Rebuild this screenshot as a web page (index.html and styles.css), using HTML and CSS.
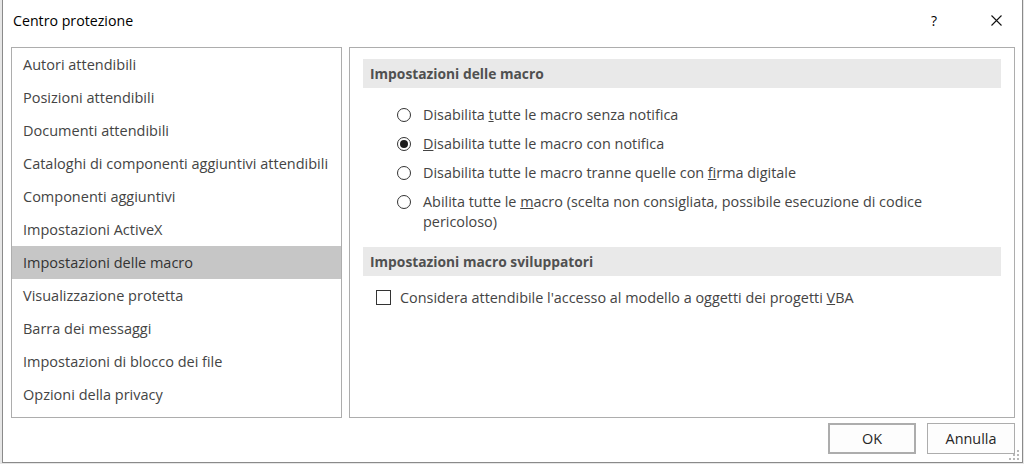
FILE: index.html
```html
<!DOCTYPE html>
<html lang="it">
<head>
<meta charset="utf-8">
<title>Centro protezione</title>
<link rel="stylesheet" href="styles.css">
</head>
<body>
<div class="window">
  <div class="titlebar">
    <span class="title">Centro protezione</span>
    <span class="help">?</span>
    <span class="close">
      <svg width="11" height="11" viewBox="0 0 11 11"><path d="M0.5 0.5 L10.5 10.5 M10.5 0.5 L0.5 10.5" stroke="#111" stroke-width="1.1" fill="none"/></svg>
    </span>
  </div>
  <div class="main">
    <ul class="nav">
      <li class="nav-item">Autori attendibili</li>
      <li class="nav-item">Posizioni attendibili</li>
      <li class="nav-item">Documenti attendibili</li>
      <li class="nav-item">Cataloghi di componenti aggiuntivi attendibili</li>
      <li class="nav-item">Componenti aggiuntivi</li>
      <li class="nav-item">Impostazioni ActiveX</li>
      <li class="nav-item selected">Impostazioni delle macro</li>
      <li class="nav-item">Visualizzazione protetta</li>
      <li class="nav-item">Barra dei messaggi</li>
      <li class="nav-item">Impostazioni di blocco dei file</li>
      <li class="nav-item">Opzioni della privacy</li>
    </ul>
    <div class="content">
      <div class="section-head">Impostazioni delle macro</div>
      <div class="radios">
        <div class="opt"><span class="radio"></span><span class="opt-text">Disabilita <u>t</u>utte le macro senza notifica</span></div>
        <div class="opt"><span class="radio checked"></span><span class="opt-text"><u>D</u>isabilita tutte le macro con notifica</span></div>
        <div class="opt"><span class="radio"></span><span class="opt-text">Disabilita tutte le macro tranne quelle con <u>f</u>irma digitale</span></div>
        <div class="opt"><span class="radio"></span><span class="opt-text">Abilita tutte le <u>m</u>acro (scelta non consigliata, possibile esecuzione di codice<br>pericoloso)</span></div>
      </div>
      <div class="section-head">Impostazioni macro sviluppatori</div>
      <div class="check-opt"><span class="checkbox"></span><span class="opt-text">Considera attendibile l'accesso al modello a oggetti dei progetti <u>V</u>BA</span></div>
    </div>
  </div>
  <div class="footer">
    <button class="btn btn-default">OK</button>
    <button class="btn">Annulla</button>
  </div>
  <svg class="grip" width="12" height="12" viewBox="0 0 12 12">
    <rect x="8" y="0" width="2" height="2" fill="#b8b8b8"/>
    <rect x="4" y="4" width="2" height="2" fill="#b8b8b8"/>
    <rect x="8" y="4" width="2" height="2" fill="#b8b8b8"/>
    <rect x="0" y="8" width="2" height="2" fill="#b8b8b8"/>
    <rect x="4" y="8" width="2" height="2" fill="#b8b8b8"/>
    <rect x="8" y="8" width="2" height="2" fill="#b8b8b8"/>
  </svg>
</div>
</body>
</html>
```
FILE: styles.css
```css
* { box-sizing: border-box; }
html, body {
  margin: 0;
  padding: 0;
  width: 1024px;
  height: 464px;
  overflow: hidden;
  background: #e6e6e6;
  font-family: "Open Sans", "Noto Sans", sans-serif;
  font-size: 14.4px;
  color: #444;
}
.window {
  position: relative;
  margin-left: 2px;
  width: 1021px;
  height: 463px;
  background: #fff;
  border-left: 1px solid #8a8a8a;
  border-right: 1px solid #8a8a8a;
  border-bottom: 1px solid #8a8a8a;
}
.titlebar {
  height: 40px;
  display: flex;
  align-items: center;
  padding-left: 10px;
  color: #000;
}
.title {
  flex: 1;
  font-size: 14.2px;
}
.help {
  width: 46px;
  text-align: center;
  margin-right: 16px;
  font-size: 14px;
}
.close {
  width: 46px;
  margin-right: 3px;
  display: flex;
  justify-content: center;
  align-items: center;
}
.close svg { display: block; }
.main {
  display: flex;
  gap: 7px;
  padding-left: 8px;
  margin-top: 7px;
}
.nav {
  list-style: none;
  margin: 0;
  padding: 0;
  width: 331px;
  height: 371px;
  border: 1px solid #adadad;
}
.nav-item {
  height: 33px;
  line-height: 33px;
  padding-left: 11px;
  white-space: nowrap;
  color: #444;
  font-size: 14.5px;
}
.nav-item.selected {
  background: #c6c6c6;
  color: #333;
}
.content {
  width: 666px;
  height: 371px;
  border: 1px solid #adadad;
  padding: 11px 13px 0 13px;
}
.section-head {
  height: 29px;
  line-height: 29px;
  background: #e9e9e9;
  padding-left: 7px;
  font-weight: 700;
  font-size: 13.8px;
  color: #505050;
}
.radios {
  margin-top: 12px;
  margin-bottom: 11px;
}
.opt {
  display: flex;
  align-items: flex-start;
  padding-left: 34px;
  padding-top: 4.5px;
  padding-bottom: 4.5px;
  line-height: 20px;
}
.radio {
  flex: none;
  width: 14px;
  height: 14px;
  border: 1px solid #333;
  border-radius: 50%;
  margin-top: 3px;
  margin-right: 12px;
  display: flex;
  align-items: center;
  justify-content: center;
}
.radio.checked::after {
  content: "";
  width: 8px;
  height: 8px;
  border-radius: 50%;
  background: #1a1a1a;
}
.opt-text { color: #444; }
.check-opt {
  display: flex;
  align-items: center;
  height: 29px;
  margin-top: 7px;
  padding-left: 13px;
}
.checkbox {
  flex: none;
  width: 15px;
  height: 15px;
  border: 1px solid #333;
  margin-right: 9px;
}
.footer {
  display: flex;
  justify-content: flex-end;
  gap: 11px;
  padding-right: 7px;
  margin-top: 5px;
}
.btn {
  width: 88px;
  height: 31px;
  background: #fdfdfd;
  border: 1px solid #adadad;
  font-family: "Open Sans", "Noto Sans", sans-serif;
  font-size: 14.4px;
  color: #262626;
  padding: 0;
}
.btn-default {
  border: 2px solid #adadad;
}
.grip {
  position: absolute;
  right: 1px;
  bottom: 0;
}
```
